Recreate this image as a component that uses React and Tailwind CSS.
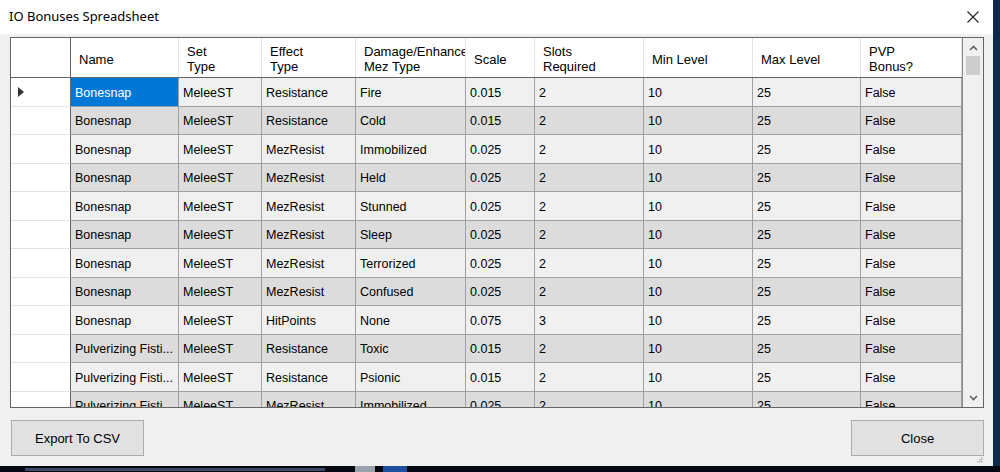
import React from "react";

const columns = [
  { key: "name", label: ["Name"], width: "w-[108px]" },
  { key: "setType", label: ["Set", "Type"], width: "w-[83px]" },
  { key: "effect", label: ["Effect", "Type"], width: "w-[94px]" },
  { key: "damage", label: ["Damage/Enhance", "Mez Type"], width: "w-[110px]" },
  { key: "scale", label: ["Scale"], width: "w-[69px]" },
  { key: "slots", label: ["Slots", "Required"], width: "w-[109px]" },
  { key: "min", label: ["Min Level"], width: "w-[109px]" },
  { key: "max", label: ["Max Level"], width: "w-[108px]" },
  { key: "pvp", label: ["PVP", "Bonus?"], width: "w-[101px]" },
];

function row(name, effect, damage, scale, slots) {
  return {
    name,
    setType: "MeleeST",
    effect,
    damage,
    scale,
    slots,
    min: "10",
    max: "25",
    pvp: "False",
  };
}

const rows = [
  row("Bonesnap", "Resistance", "Fire", "0.015", "2"),
  row("Bonesnap", "Resistance", "Cold", "0.015", "2"),
  row("Bonesnap", "MezResist", "Immobilized", "0.025", "2"),
  row("Bonesnap", "MezResist", "Held", "0.025", "2"),
  row("Bonesnap", "MezResist", "Stunned", "0.025", "2"),
  row("Bonesnap", "MezResist", "Sleep", "0.025", "2"),
  row("Bonesnap", "MezResist", "Terrorized", "0.025", "2"),
  row("Bonesnap", "MezResist", "Confused", "0.025", "2"),
  row("Bonesnap", "HitPoints", "None", "0.075", "3"),
  row("Pulverizing Fisti...", "Resistance", "Toxic", "0.015", "2"),
  row("Pulverizing Fisti...", "Resistance", "Psionic", "0.015", "2"),
  row("Pulverizing Fisti...", "MezResist", "Immobilized", "0.025", "2"),
];

function HeaderRow() {
  return (
    <div className="flex h-[40px] shrink-0 border-b border-[#646464] bg-white">
      <div className="w-[60px] shrink-0 border-r border-[#646464]" />
      {columns.map((col) => (
        <div
          key={col.key}
          className={`${col.width} flex shrink-0 flex-col justify-center overflow-hidden whitespace-nowrap border-r border-[#e5e5e5] pl-[8px] pt-[3px] text-[13px] leading-[15px]`}
        >
          {col.label.map((line) => (
            <span key={line}>{line}</span>
          ))}
        </div>
      ))}
    </div>
  );
}

function DataRow({ item, index }) {
  const shade = index % 2 === 1 ? "bg-[#dcdcdc]" : "bg-[#f0f0f0]";

  return (
    <div className="flex h-[28.5px] shrink-0">
      <div className="flex w-[60px] shrink-0 items-center border-b border-r border-b-[#e3e3e3] border-r-[#646464] bg-white pl-[7px] pt-[1px]">
        {index === 0 && (
          <svg width="6" height="10" viewBox="0 0 6 10">
            <path d="M0 0 L6 5 L0 10 Z" fill="#333" />
          </svg>
        )}
      </div>
      {columns.map((col) => {
        const isSelected = index === 0 && col.key === "name";
        return (
          <div
            key={col.key}
            className={`${col.width} flex shrink-0 items-center overflow-hidden whitespace-nowrap border-b border-r border-[#a0a0a0] pl-[4px] pt-[3px] ${
              isSelected ? "bg-[#0078d7] text-white" : shade
            }`}
          >
            {item[col.key]}
          </div>
        );
      })}
    </div>
  );
}

function ScrollBar() {
  return (
    <div className="flex w-[21px] shrink-0 flex-col border-l border-[#8a8a8a] bg-[#f0f0f0]">
      <div className="flex h-[18px] items-center justify-center pt-[2px]">
        <svg width="9" height="6" viewBox="0 0 9 6">
          <path d="M1 5 L4.5 1.5 L8 5" stroke="#606060" strokeWidth="1.6" fill="none" />
        </svg>
      </div>
      <div className="mx-[3px] h-[19px] bg-[#cdcdcd]" />
      <div className="flex-1" />
      <div className="flex h-[18px] items-center justify-center">
        <svg width="9" height="6" viewBox="0 0 9 6">
          <path d="M1 1 L4.5 4.5 L8 1" stroke="#606060" strokeWidth="1.6" fill="none" />
        </svg>
      </div>
    </div>
  );
}

function WinButton({ children }) {
  return (
    <button className="flex h-[36px] w-[133px] items-center justify-center border border-[#adadad] bg-[#e1e1e1] pt-[1px] text-[13px] text-black">
      {children}
    </button>
  );
}

export default function App() {
  return (
    <div className="flex h-[472px] w-[1000px] flex-col overflow-hidden bg-[#07101f] font-['Liberation_Sans',Arial,sans-serif] text-[12.5px] text-black">
      <div className="flex h-[466px] shrink-0">
        <div className="flex w-[993px] shrink-0 flex-col bg-[#f0f0f0]">
          <div className="flex h-[34px] shrink-0 items-center justify-between bg-white pl-[9px] pr-[14px]">
            <span className="font-['Noto_Sans',sans-serif] text-[13px]">
              IO Bonuses Spreadsheet
            </span>
            <svg width="12" height="12" viewBox="0 0 12 12">
              <path d="M0.5 0.5 L11.5 11.5 M11.5 0.5 L0.5 11.5" stroke="#222" strokeWidth="1.1" />
            </svg>
          </div>

          <div className="flex flex-1 flex-col px-[10px] pt-[3px]">
            <div className="flex h-[371px] w-[974px] border border-[#646464] bg-white">
              <div className="flex min-w-0 flex-1 flex-col overflow-hidden">
                <HeaderRow />
                {rows.map((item, index) => (
                  <DataRow key={index} item={item} index={index} />
                ))}
              </div>
              <ScrollBar />
            </div>

            <div className="-mr-[1px] mt-[12px] flex items-start justify-between pl-[1px]">
              <WinButton>Export To CSV</WinButton>
              <WinButton>Close</WinButton>
            </div>

            <div className="mt-auto flex justify-end pb-[3px]">
              <svg width="7" height="7" viewBox="0 0 7 7">
                <rect x="5" y="1" width="1.5" height="1.5" fill="#b5b5b5" />
                <rect x="3" y="3" width="1.5" height="1.5" fill="#b5b5b5" />
                <rect x="5" y="3" width="1.5" height="1.5" fill="#b5b5b5" />
                <rect x="1" y="5" width="1.5" height="1.5" fill="#b5b5b5" />
                <rect x="3" y="5" width="1.5" height="1.5" fill="#b5b5b5" />
                <rect x="5" y="5" width="1.5" height="1.5" fill="#b5b5b5" />
              </svg>
            </div>
          </div>
        </div>
        <div className="flex-1 bg-[#10284a]" />
      </div>
      <div className="flex flex-1 items-center gap-[8px] bg-[#04080f] pl-[25px]">
        <div className="h-[3px] w-[300px] bg-[#3a4a66]" />
        <div className="ml-[22px] h-[6px] w-[20px] bg-[#9aa3ad]" />
        <div className="h-[6px] w-[24px] bg-[#1e4fa0]" />
      </div>
    </div>
  );
}
